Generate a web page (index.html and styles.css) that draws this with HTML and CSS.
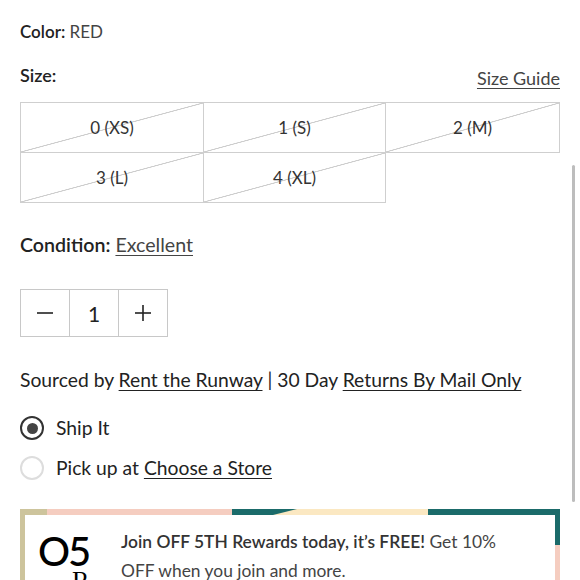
FILE: index.html
```html
<!DOCTYPE html>
<html lang="en">
<head>
<meta charset="utf-8">
<title>Product options</title>
<link rel="stylesheet" href="styles.css">
</head>
<body>
<main class="page">
  <div class="row-color"><span class="label">Color:</span> <span class="value">RED</span></div>

  <div class="row-size">
    <span class="label">Size:</span>
    <a class="link size-guide" href="#">Size Guide</a>
  </div>

  <div class="size-grid">
    <div class="size-cell">0 (XS)</div>
    <div class="size-cell">1 (S)</div>
    <div class="size-cell">2 (M)</div>
    <div class="size-cell">3 (L)</div>
    <div class="size-cell">4 (XL)</div>
  </div>

  <div class="row-condition"><span class="label">Condition:</span> <a class="link" href="#">Excellent</a></div>

  <div class="stepper">
    <button class="step-btn" type="button" aria-label="Decrease">
      <svg width="18" height="18" viewBox="0 0 18 18"><line x1="1" y1="9" x2="17" y2="9" stroke="#222" stroke-width="1.6"/></svg>
    </button>
    <div class="step-val">1</div>
    <button class="step-btn" type="button" aria-label="Increase">
      <svg width="18" height="18" viewBox="0 0 18 18"><line x1="1" y1="9" x2="17" y2="9" stroke="#222" stroke-width="1.6"/><line x1="9" y1="1" x2="9" y2="17" stroke="#222" stroke-width="1.6"/></svg>
    </button>
  </div>

  <p class="sourced">Sourced by <a class="link dark" href="#">Rent the Runway</a> | 30 Day <a class="link dark" href="#">Returns By Mail Only</a></p>

  <div class="delivery">
    <label class="radio-row"><span class="radio checked"></span><span>Ship It</span></label>
    <label class="radio-row"><span class="radio"></span><span>Pick up at <a class="link dark" href="#">Choose a Store</a></span></label>
  </div>

  <section class="promo">
    <svg class="promo-top" width="540" height="6" viewBox="0 0 540 6" preserveAspectRatio="none">
      <rect x="0" y="0" width="27" height="6" fill="#cdc49c"/>
      <rect x="27" y="0" width="185" height="6" fill="#f5cdc0"/>
      <rect x="212" y="0" width="196" height="6" fill="#fbe8c2"/>
      <polygon points="212,0 277,0 253,6 212,6" fill="#1b6b6a"/>
      <rect x="408" y="0" width="132" height="6" fill="#1b6b6a"/>
    </svg>
    <div class="promo-body">
      <div class="promo-logo"><span class="o5">O5</span><span class="r">R</span></div>
      <p class="promo-text"><strong>Join OFF 5TH Rewards today, it’s FREE!</strong> Get 10% OFF when you join and more.</p>
    </div>
  </section>
</main>
<div class="scroll-thumb"></div>
</body>
</html>
```

FILE: styles.css
```css
html, body {
  margin: 0;
  padding: 0;
  height: 580px;
  overflow: hidden;
  background: #fff;
}
body {
  font-family: Lato, "Noto Sans", sans-serif;
  color: #222;
  position: relative;
}
.page {
  padding: 20px 20px 0 20px;
  width: 540px;
}
.label {
  font-weight: 600;
  color: #222;
}
.value {
  color: #444;
}
.link {
  color: #444;
  text-decoration: underline;
  text-underline-offset: 3px;
  text-decoration-thickness: 1px;
}
.link.dark {
  color: #222;
}
.row-color {
  font-size: 17px;
  line-height: 24px;
}
.row-size {
  margin-top: 19px;
  display: flex;
  justify-content: space-between;
  align-items: flex-end;
  font-size: 18px;
  line-height: 24px;
}
.size-guide {
  font-size: 18px;
  line-height: 24px;
  position: relative;
  top: 3px;
}
.size-grid {
  margin-top: 15px;
  display: grid;
  grid-template-columns: 182px 181px 1fr;
  gap: 1px;
  padding: 1px;
}
.size-cell {
  height: 49px;
  display: flex;
  align-items: center;
  justify-content: center;
  font-size: 17px;
  color: #333;
  box-shadow: 0 0 0 1px #cfcfcf;
  background: linear-gradient(to bottom right, transparent calc(50% - 0.8px), #cdcdcd calc(50% - 0.3px), #cdcdcd calc(50% + 0.3px), transparent calc(50% + 0.8px));
}
.row-condition {
  margin-top: 30px;
  font-size: 19.6px;
  line-height: 24px;
}
.stepper {
  margin-top: 32px;
  display: flex;
  width: max-content;
  border: 1px solid #c8c8c8;
}
.step-btn, .step-val {
  width: 48px;
  height: 46px;
  display: flex;
  align-items: center;
  justify-content: center;
  background: #fff;
  border: 0;
  padding: 0;
  font-family: inherit;
  font-size: 21px;
  color: #222;
}
.step-val {
  border-left: 1px solid #c8c8c8;
  border-right: 1px solid #c8c8c8;
}
.sourced {
  margin: 31px 0 0 0;
  font-size: 19.3px;
  line-height: 24px;
  color: #222;
}
.delivery {
  margin-top: 24px;
  display: flex;
  flex-direction: column;
  gap: 16px;
}
.radio-row {
  display: flex;
  align-items: center;
  gap: 12px;
  font-size: 19.3px;
  line-height: 24px;
  color: #222;
}
.radio {
  width: 20px;
  height: 20px;
  border-radius: 50%;
  border: 2px solid #ddd;
  box-sizing: content-box;
  display: flex;
  align-items: center;
  justify-content: center;
}
.radio.checked {
  border-color: #333;
}
.radio.checked::after {
  content: "";
  width: 11px;
  height: 11px;
  border-radius: 50%;
  background: #444;
}
.promo {
  margin-top: 29px;
  width: 540px;
}
.promo-top {
  display: block;
}
.promo-body {
  display: flex;
  gap: 30px;
  height: 120px;
  padding: 18px 0 0 13px;
  border-left: 5px solid #cdc49c;
  background:
    linear-gradient(#1b6b6a, #1b6b6a) right top / 5px 30px no-repeat,
    linear-gradient(#f5cdc0, #f5cdc0) right top / 5px 100% no-repeat,
    #fff;
}
.promo-logo {
  display: flex;
  flex-direction: column;
  align-items: flex-start;
  width: 53px;
  color: #000;
}
.o5 {
  font-size: 40px;
  line-height: 36px;
  font-weight: 500;
  letter-spacing: -2px;
}
.r {
  font-family: "Liberation Serif", serif;
  font-size: 26px;
  line-height: 20px;
  margin-top: 2px;
  margin-left: 34px;
}
.promo-text {
  margin: -6px 0 0 0;
  width: 400px;
  font-size: 17.4px;
  line-height: 29px;
  color: #444;
}
.promo-text strong {
  font-weight: 600;
  color: #333;
}
.scroll-thumb {
  position: absolute;
  top: 165px;
  right: 5px;
  width: 3px;
  height: 337px;
  border-radius: 2px;
  background: #bdbdbd;
}
```
